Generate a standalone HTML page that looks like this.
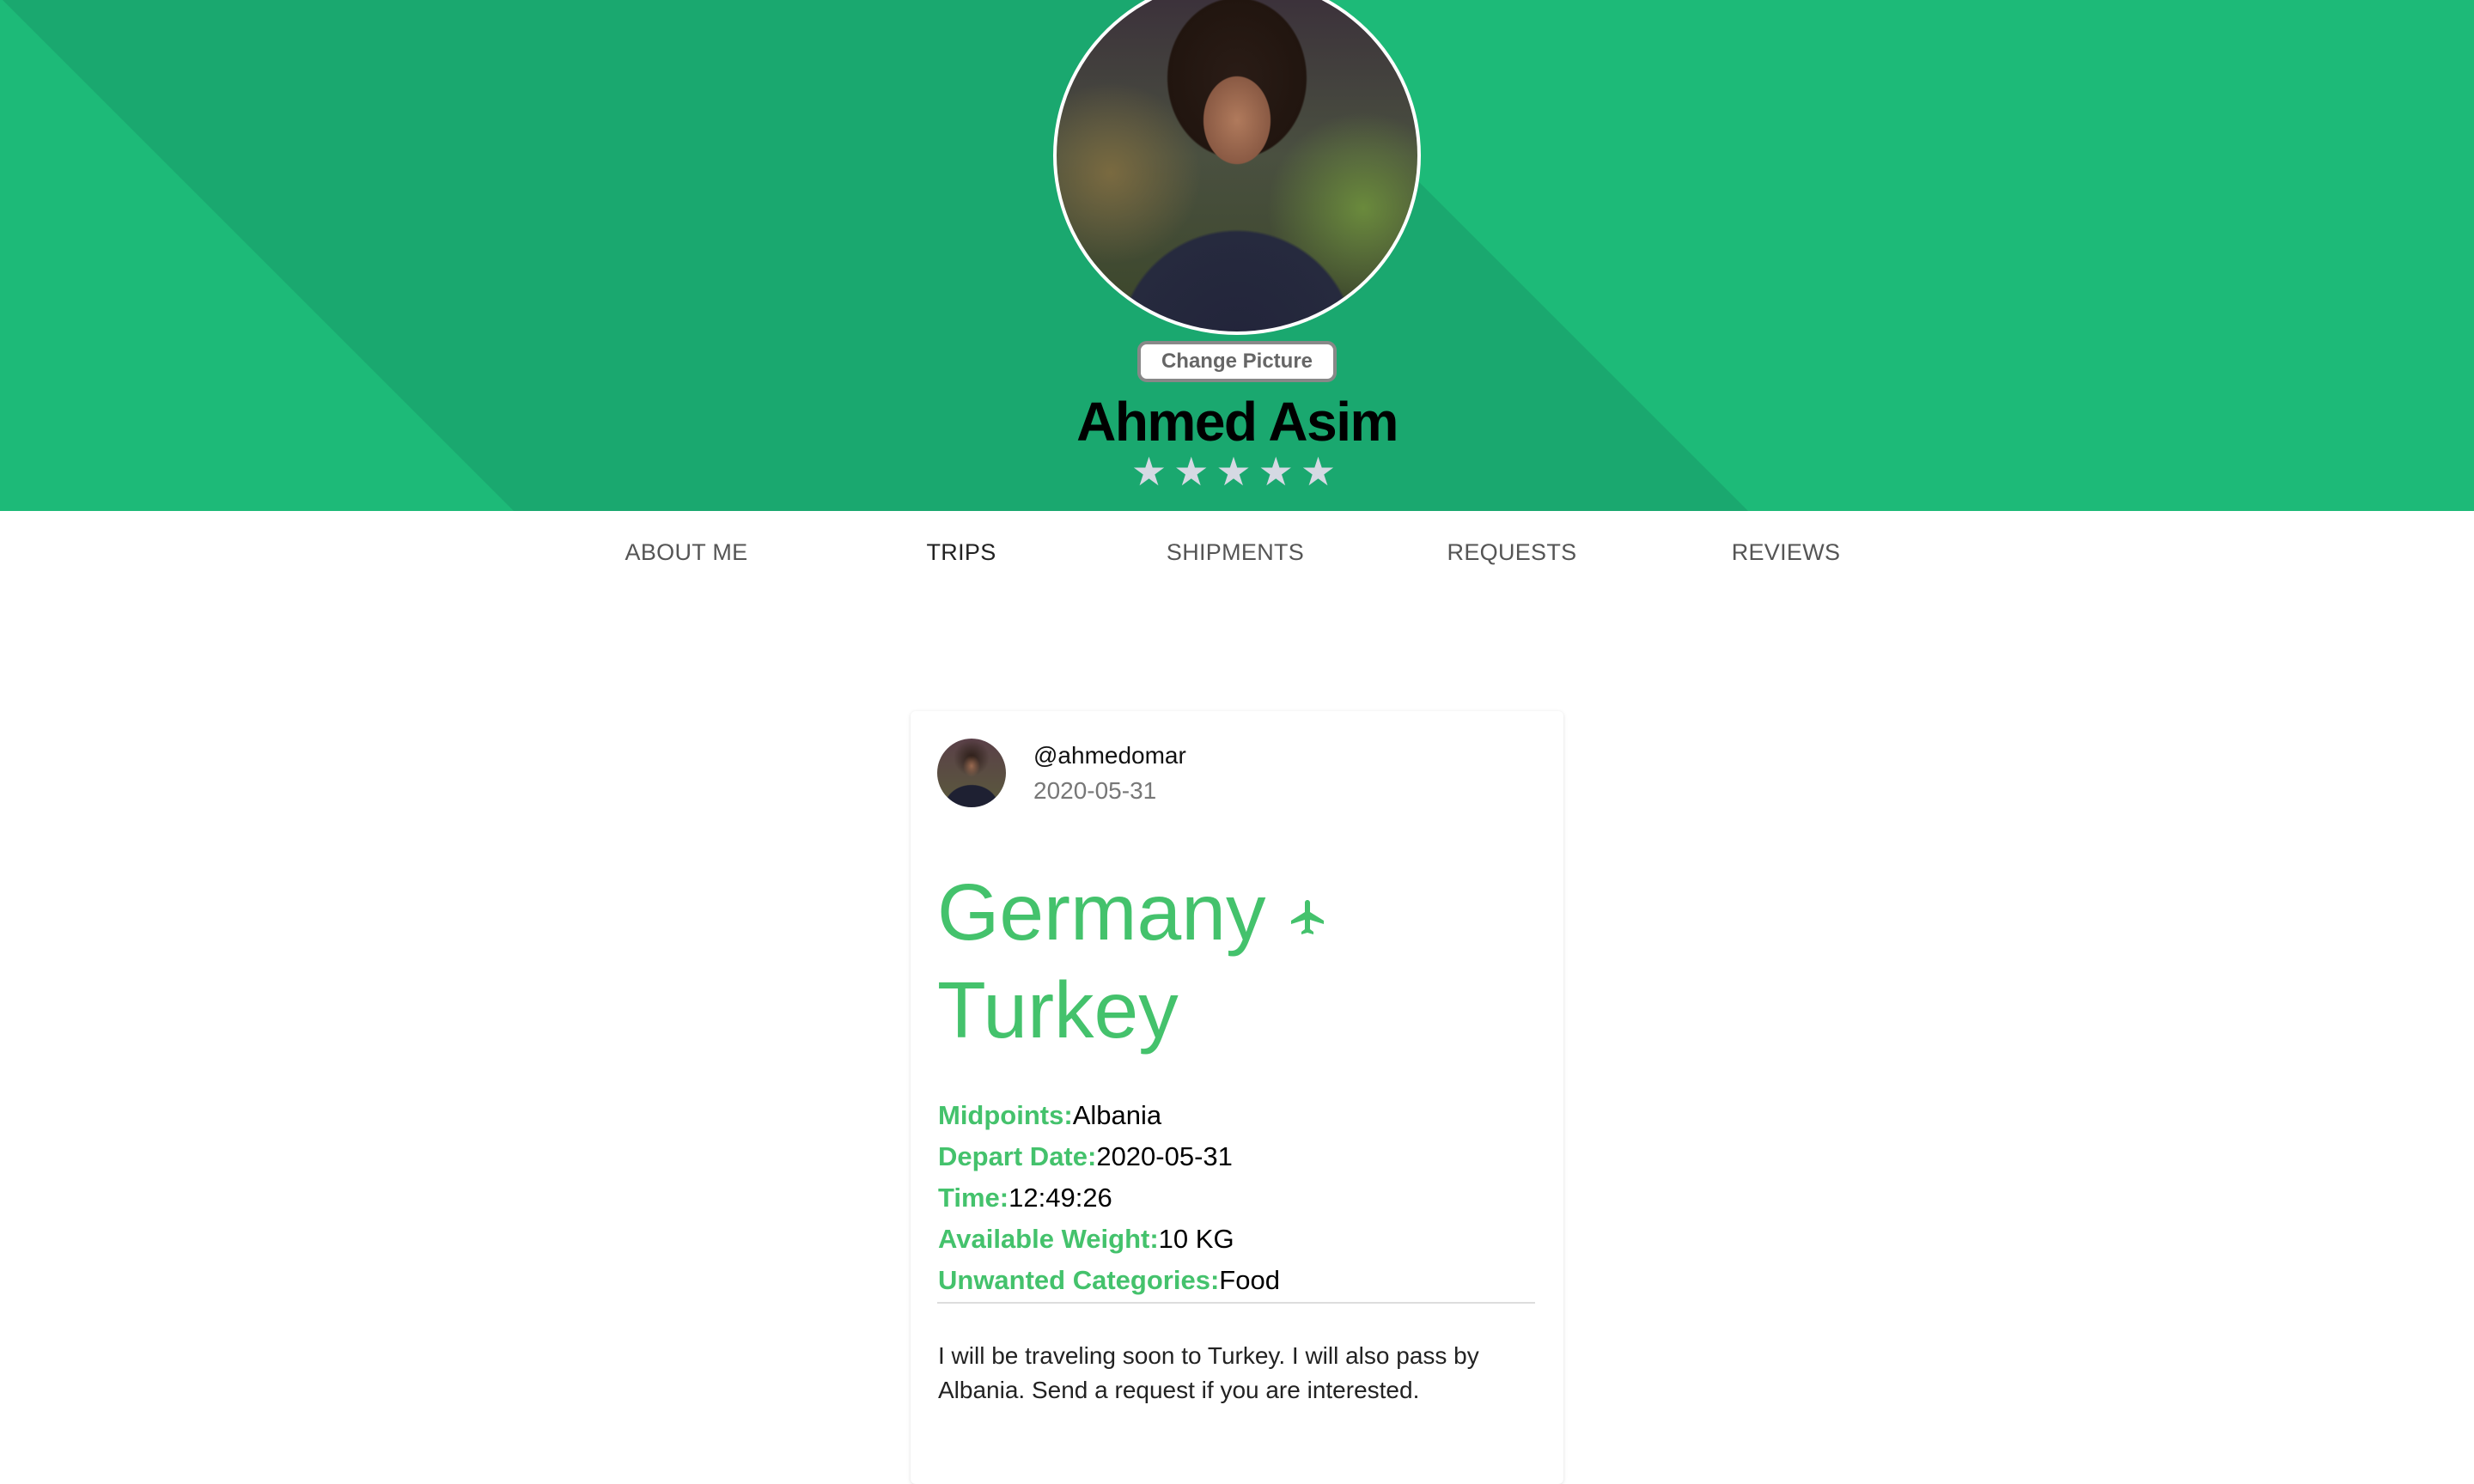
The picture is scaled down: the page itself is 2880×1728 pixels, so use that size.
<!DOCTYPE html>
<html><head><meta charset="utf-8"><style>
*{margin:0;padding:0;box-sizing:border-box}
body{width:2880px;height:1639px;overflow:hidden;background:#fff;font-family:"Liberation Sans",Arial,sans-serif;position:relative}
.hdr{position:absolute;left:0;top:0;width:2880px;height:595px;background:#1dba78;overflow:hidden}
.av{position:absolute;left:1226px;top:-28px;width:428px;height:418px;border-radius:50%;border:4px solid #fff;overflow:hidden;background:
radial-gradient(ellipse 55px 72px at 50% 40%,#b07a5c 0,#8a5a44 70%,transparent 72%),
radial-gradient(ellipse 100px 115px at 50% 28%,#2a1c16 0,#21150f 80%,transparent 82%),
radial-gradient(ellipse 170px 170px at 50% 105%,#22243a 0,#262a3e 80%,transparent 82%),
radial-gradient(circle at 85% 65%,#6a8a3c 0,transparent 25%),
radial-gradient(circle at 15% 55%,#7a6a40 0,transparent 25%),
linear-gradient(#3a2e3a,#4a5040 50%,#3a4628)}
.btn{position:absolute;left:1324px;top:397px;width:232px;height:48px;border:4px solid #888;border-radius:11px;background:#fff;color:#666;font-weight:bold;font-size:24px;text-align:center;line-height:40px}
.name{position:absolute;left:0;width:2880px;top:454px;text-align:center;font-weight:bold;font-size:64px;color:#000;letter-spacing:-1.5px}
.stars{position:absolute;left:0;width:2880px;top:522px;text-align:center;color:#d5d9e3;font-size:46px;letter-spacing:8px}
.tab{position:absolute;top:628px;font-size:27px;color:#555;letter-spacing:0.3px;transform:translateX(-50%)}
.card{position:absolute;left:1060px;top:828px;width:760px;height:900px;background:#fff;border-radius:6px;box-shadow:0 1px 5px rgba(0,0,0,.13)}
.sav{position:absolute;left:1091px;top:860px;width:80px;height:80px;border-radius:50%;background:
radial-gradient(ellipse 11px 14px at 50% 40%,#9a6a50 0,transparent 90%),
radial-gradient(ellipse 22px 22px at 50% 28%,#2a1c16 0,transparent 95%),
radial-gradient(ellipse 36px 30px at 50% 100%,#1e2032 0,#1e2032 85%,transparent 88%),
linear-gradient(#5a4048,#5a5a3c)}
.g{color:#44c26c;font-weight:bold}
.lbl{position:absolute;left:1092px;font-size:31px;color:#000}
</style></head><body>
<div class="hdr">
<svg width="2880" height="595" style="position:absolute;left:0;top:0"><polygon points="3,0 1440,0 2035,595 598,595" fill="#1aa86f"/></svg>
<div class="av"></div>
<div class="btn">Change Picture</div>
<div class="name">Ahmed Asim</div>
<div class="stars">★★★★★</div>
</div>
<div class="tab" style="left:799px">ABOUT ME</div>
<div class="tab" style="left:1119px;color:#222">TRIPS</div>
<div class="tab" style="left:1438px">SHIPMENTS</div>
<div class="tab" style="left:1760px">REQUESTS</div>
<div class="tab" style="left:2079px">REVIEWS</div>
<div class="card"></div>
<div class="sav"></div>
<div style="position:absolute;left:1203px;top:864px;font-size:28px;color:#111">@ahmedomar</div>
<div style="position:absolute;left:1203px;top:905px;font-size:28px;color:#777">2020-05-31</div>
<div style="position:absolute;left:1091px;top:1005px;font-size:93px;color:#44c26c;line-height:114px">Germany<br>Turkey</div>
<svg style="position:absolute;left:1499px;top:1044px" width="48" height="48" viewBox="0 0 24 24"><path fill="#44c26c" d="M21 16v-2l-8-5V3.5c0-.83-.67-1.5-1.5-1.5S10 2.67 10 3.5V9l-8 5v2l8-2.5V19l-2 1.5V22l3.5-1 3.5 1v-1.5L13 19v-5.5l8 2.5z"/></svg>
<div class="lbl" style="top:1281px"><span class="g">Midpoints:</span>Albania</div>
<div class="lbl" style="top:1329px"><span class="g">Depart Date:</span>2020-05-31</div>
<div class="lbl" style="top:1377px"><span class="g">Time:</span>12:49:26</div>
<div class="lbl" style="top:1425px"><span class="g">Available Weight:</span>10 KG</div>
<div class="lbl" style="top:1473px"><span class="g">Unwanted Categories:</span>Food</div>
<div style="position:absolute;left:1091px;top:1516px;width:696px;height:2px;background:#ddd"></div>
<div style="position:absolute;left:1092px;top:1559px;width:680px;font-size:28px;line-height:40px;color:#222">I will be traveling soon to Turkey. I will also pass by Albania. Send a request if you are interested.</div>
</body></html>
